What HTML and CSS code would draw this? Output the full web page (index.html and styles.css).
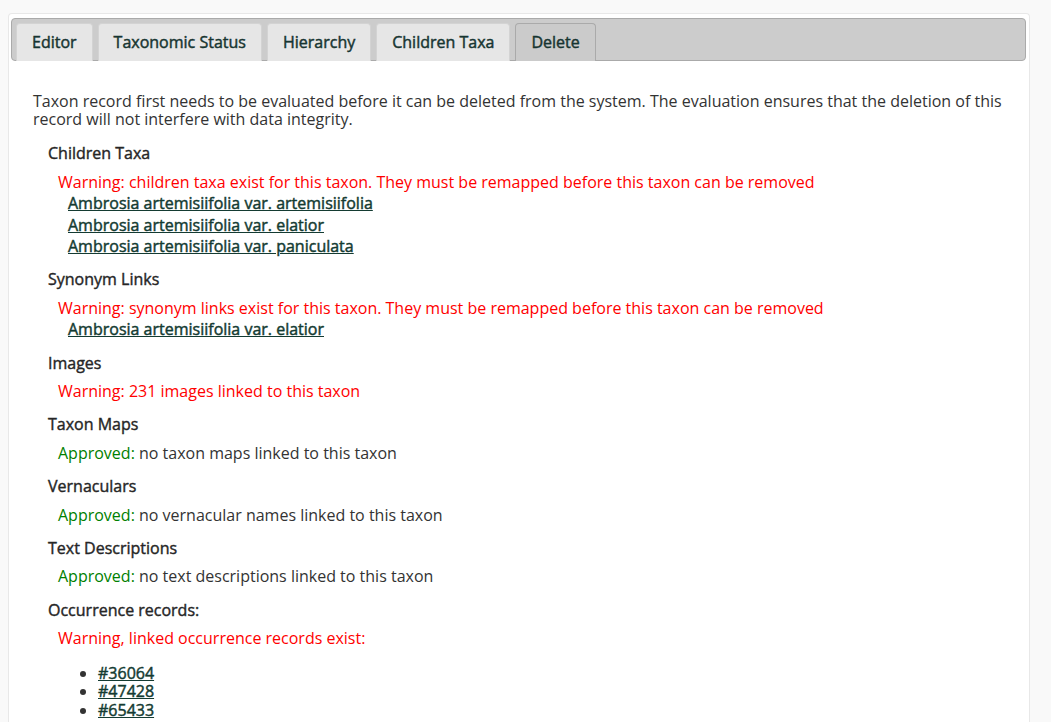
FILE: index.html
```html
<!DOCTYPE html>
<html>
<head>
<meta charset="utf-8">
<link rel="stylesheet" href="styles.css">
</head>
<body>
<div class="panel">
  <div class="tabs">
    <ul class="tabbar">
      <li class="tab"><a href="#">Editor</a></li>
      <li class="tab"><a href="#">Taxonomic Status</a></li>
      <li class="tab"><a href="#">Hierarchy</a></li>
      <li class="tab"><a href="#">Children Taxa</a></li>
      <li class="tab active"><a href="#">Delete</a></li>
    </ul>
    <div class="tabpanel">
      <p class="intro">Taxon record first needs to be evaluated before it can be deleted from the system. The evaluation ensures that the deletion of this record will not interfere with data integrity.</p>

      <div class="section">
        <div class="sec-title">Children Taxa</div>
        <div class="sec-body">
          <div class="warn">Warning: children taxa exist for this taxon. They must be remapped before this taxon can be removed</div>
          <div class="link-row"><a href="#">Ambrosia artemisiifolia var. artemisiifolia</a></div>
          <div class="link-row"><a href="#">Ambrosia artemisiifolia var. elatior</a></div>
          <div class="link-row"><a href="#">Ambrosia artemisiifolia var. paniculata</a></div>
        </div>
      </div>

      <div class="section">
        <div class="sec-title">Synonym Links</div>
        <div class="sec-body">
          <div class="warn">Warning: synonym links exist for this taxon. They must be remapped before this taxon can be removed</div>
          <div class="link-row"><a href="#">Ambrosia artemisiifolia var. elatior</a></div>
        </div>
      </div>

      <div class="section">
        <div class="sec-title">Images</div>
        <div class="sec-body">
          <div class="warn">Warning: 231 images linked to this taxon</div>
        </div>
      </div>

      <div class="section">
        <div class="sec-title">Taxon Maps</div>
        <div class="sec-body">
          <div><span class="ok">Approved:</span> no taxon maps linked to this taxon</div>
        </div>
      </div>

      <div class="section">
        <div class="sec-title">Vernaculars</div>
        <div class="sec-body">
          <div><span class="ok">Approved:</span> no vernacular names linked to this taxon</div>
        </div>
      </div>

      <div class="section">
        <div class="sec-title">Text Descriptions</div>
        <div class="sec-body">
          <div><span class="ok">Approved:</span> no text descriptions linked to this taxon</div>
        </div>
      </div>

      <div class="section">
        <div class="sec-title">Occurrence records:</div>
        <div class="sec-body">
          <div class="warn">Warning, linked occurrence records exist:</div>
          <ul class="occ">
            <li><a href="#">#36064</a></li>
            <li><a href="#">#47428</a></li>
            <li><a href="#">#65433</a></li>
          </ul>
        </div>
      </div>
    </div>
  </div>
</div>
</body>
</html>
```

FILE: styles.css
```css
html, body {
  margin: 0;
  padding: 0;
}
body {
  background: #f9f9f9;
  font-family: "Open Sans", "DejaVu Sans", sans-serif;
  font-size: 16px;
  color: #333;
}
.panel {
  margin: 13px 21px 0 8px;
  background: #fff;
  border: 1px solid #e8e8e8;
  border-bottom: none;
  border-radius: 4px 4px 0 0;
  padding: 4px 3px 0 2px;
  min-height: 720px;
}
.tabbar {
  list-style: none;
  margin: 0;
  padding: 4px 4px 0 4px;
  display: flex;
  gap: 5px;
  background: #cccccc;
  border: 1px solid #aaaaaa;
  border-radius: 4px;
}
.tab {
  margin: 0 0 -1px 0;
  border: 1px solid #d3d3d3;
  border-bottom: none;
  border-radius: 4px 4px 0 0;
  background: #e6e6e6;
}
.tab a {
  display: block;
  padding: 8px 15px;
  line-height: 21px;
  color: #173531;
  -webkit-text-stroke: 0.45px #173531;
  text-decoration: none;
}
.tab.active {
  background: #cbcbcb;
  border-color: #aaaaaa;
}
.tabpanel {
  padding: 31px 22px 0 22px;
}
.intro {
  margin: 0 0 15px 0;
  line-height: 18px;
}
.section {
  padding-left: 15px;
  margin-bottom: 11.8px;
  line-height: 21.5px;
}
.sec-title {
  color: #262626;
  -webkit-text-stroke: 0.4px #262626;
}
.sec-body {
  margin-top: 7px;
  padding-left: 10px;
}
.warn {
  color: #ff0000;
}
.ok {
  color: #008000;
}
.link-row {
  padding-left: 10px;
}
.section a {
  color: #143b32;
  -webkit-text-stroke: 0.45px #143b32;
  text-decoration: underline;
}
.occ {
  margin: 14px 0 0 0;
  padding-left: 40px;
  line-height: 18.5px;
}
```
